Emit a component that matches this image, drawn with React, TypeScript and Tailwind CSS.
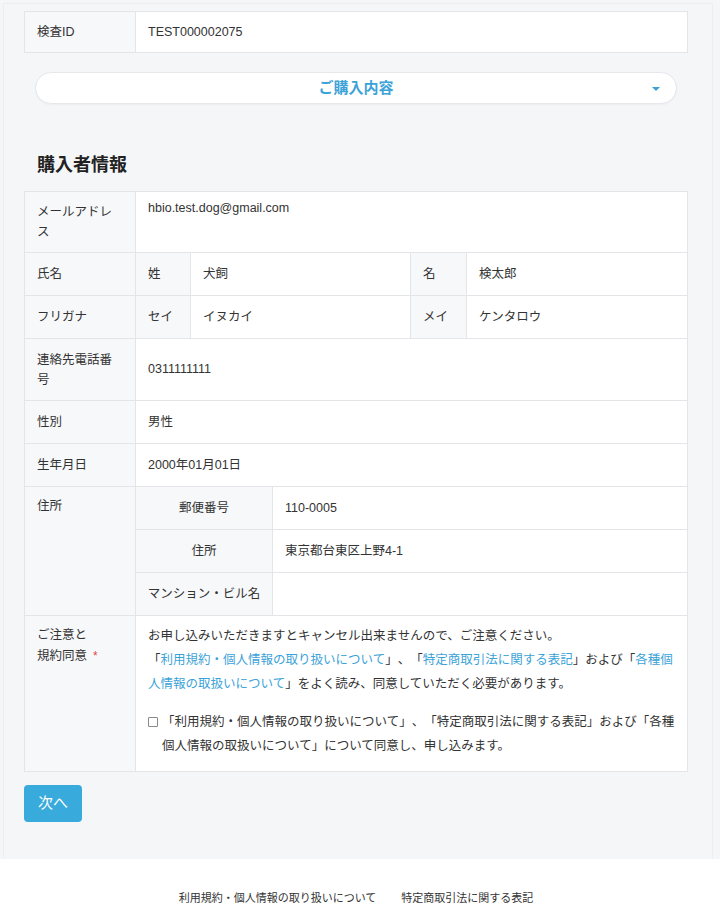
import React from 'react'

const font = { fontFamily: '"Liberation Sans", "Noto Sans CJK JP", sans-serif' }

function Label({ children, className = '' }: { children: React.ReactNode; className?: string }) {
  return (
    <div className={`w-[111px] shrink-0 bg-[#f7f8fa] border-r border-[#e3e5e8] px-3 leading-[20px] ${className}`}>
      {children}
    </div>
  )
}

function Row({ label, value, h }: { label: React.ReactNode; value: string; h: string }) {
  return (
    <div className={`flex border-t border-[#e3e5e8] ${h}`}>
      <Label className="flex items-center">{label}</Label>
      <div className="flex-1 flex items-center px-3">{value}</div>
    </div>
  )
}

function NameRow({ a, av, b, bv }: { a: string; av: string; b: string; bv: string }) {
  return (
    <div className="flex border-t border-[#e3e5e8] h-[43px]">
      <div className="w-[55px] shrink-0 bg-[#f7f8fa] border-r border-[#e3e5e8] px-3 flex items-center">{a}</div>
      <div className="w-[220px] shrink-0 border-r border-[#e3e5e8] px-3 flex items-center">{av}</div>
      <div className="w-[56px] shrink-0 bg-[#f7f8fa] border-r border-[#e3e5e8] px-3 flex items-center">{b}</div>
      <div className="flex-1 px-3 flex items-center">{bv}</div>
    </div>
  )
}

function AddrRow({ label, value, first }: { label: string; value: string; first?: boolean }) {
  return (
    <div className={`flex ${first ? 'h-[42px]' : 'h-[43px] border-t border-[#e3e5e8]'}`}>
      <div className="w-[137px] shrink-0 bg-[#f7f8fa] border-r border-[#e3e5e8] flex items-center justify-center">{label}</div>
      <div className="flex-1 px-3 flex items-center">{value}</div>
    </div>
  )
}

const Link = ({ children }: { children: React.ReactNode }) => <span className="text-[#3ca3d8]">{children}</span>

export default function App() {
  return (
    <div className="bg-white min-h-[915px] text-[12.5px] text-[#333] [text-spacing-trim:space-all]" style={font}>
      <div className="bg-[#f5f6f8] pt-[3px] pr-[7px] pl-[3px]">
        <div className="border-l border-r border-t border-[#eceef1] pt-[7px] pl-[20px] pr-[24px] pb-[37px]">
          {/* 検査ID */}
          <div className="flex h-[42px] border border-[#e3e5e8] bg-white">
            <div className="w-[111px] shrink-0 bg-[#f7f8fa] border-r border-[#e3e5e8] px-3 flex items-center">検査ID</div>
            <div className="flex-1 px-3 flex items-center">TEST000002075</div>
          </div>

          {/* ご購入内容 */}
          <div className="mt-[19px] mx-[11px] h-[32px] rounded-full border border-[#e6e8eb] bg-white shadow-[0_1px_2px_rgba(0,0,0,0.04)] relative flex items-center justify-center">
            <span className="text-[15px] font-bold text-[#3ca3d8]">ご購入内容</span>
            <span className="absolute right-[16px] top-[14px] w-0 h-0 border-l-[4px] border-r-[4px] border-t-[4px] border-l-transparent border-r-transparent border-t-[#3ca3d8]" />
          </div>

          <h2 className="mt-[48px] pl-[13px] text-[18px] font-bold leading-[27px] text-[#222]">購入者情報</h2>

          {/* 購入者情報 table */}
          <div className="mt-[12px] border border-[#e3e5e8] bg-white">
            <div className="flex h-[60px]">
              <Label className="flex items-center">メールアドレス</Label>
              <div className="flex-1 px-3 pt-[6px] leading-[20px]">hbio.test.dog@gmail.com</div>
            </div>
            <div className="flex border-t border-[#e3e5e8]">
              <Label className="flex items-center">氏名</Label>
              <div className="flex-1 -mt-px">
                <NameRow a="姓" av="犬飼" b="名" bv="検太郎" />
              </div>
            </div>
            <div className="flex border-t border-[#e3e5e8]">
              <Label className="flex items-center">フリガナ</Label>
              <div className="flex-1 -mt-px">
                <NameRow a="セイ" av="イヌカイ" b="メイ" bv="ケンタロウ" />
              </div>
            </div>
            <Row label="連絡先電話番号" value="0311111111" h="h-[62px]" />
            <Row label="性別" value="男性" h="h-[43px]" />
            <Row label="生年月日" value="2000年01月01日" h="h-[43px]" />
            <div className="flex border-t border-[#e3e5e8]">
              <Label className="pt-[9px]">住所</Label>
              <div className="flex-1">
                <AddrRow first label="郵便番号" value="110-0005" />
                <AddrRow label="住所" value="東京都台東区上野4-1" />
                <AddrRow label="マンション・ビル名" value="" />
              </div>
            </div>
            <div className="flex border-t border-[#e3e5e8] h-[156px]">
              <Label className="pt-[9px] leading-[21px]">
                ご注意と<br />規約同意<span className="ml-[6px] text-[#e0454f] text-[12px]">*</span>
              </Label>
              <div className="flex-1 px-3 pt-[8px] pb-[13px]">
                <p className="leading-[24px]">
                  お申し込みいただきますとキャンセル出来ませんので、ご注意ください。<br />
                  「<Link>利用規約・個人情報の取り扱いについて</Link>」、「<Link>特定商取引法に関する表記</Link>」および「<Link>各種個</Link><br />
                  <Link>人情報の取扱いについて</Link>」をよく読み、同意していただく必要があります。
                </p>
                <div className="mt-[14px] flex leading-[24px]">
                  <span className="mt-[7px] w-[10px] h-[10px] shrink-0 border border-[#888] rounded-[1px] bg-white" />
                  <span className="ml-[4px]">
                    「利用規約・個人情報の取り扱いについて」、「特定商取引法に関する表記」および「各種<br />
                    個人情報の取扱いについて」について同意し、申し込みます。
                  </span>
                </div>
              </div>
            </div>
          </div>

          <button className="mt-[13px] w-[58px] h-[37px] rounded-[4px] bg-[#38aadc] text-white text-[15px]">次へ</button>
        </div>
      </div>

      {/* Footer */}
      <div className="flex justify-center gap-[25px] pt-[31px] text-[11px] text-[#333] pr-[8px]">
        <span>利用規約・個人情報の取り扱いについて</span>
        <span>特定商取引法に関する表記</span>
      </div>
    </div>
  )
}
